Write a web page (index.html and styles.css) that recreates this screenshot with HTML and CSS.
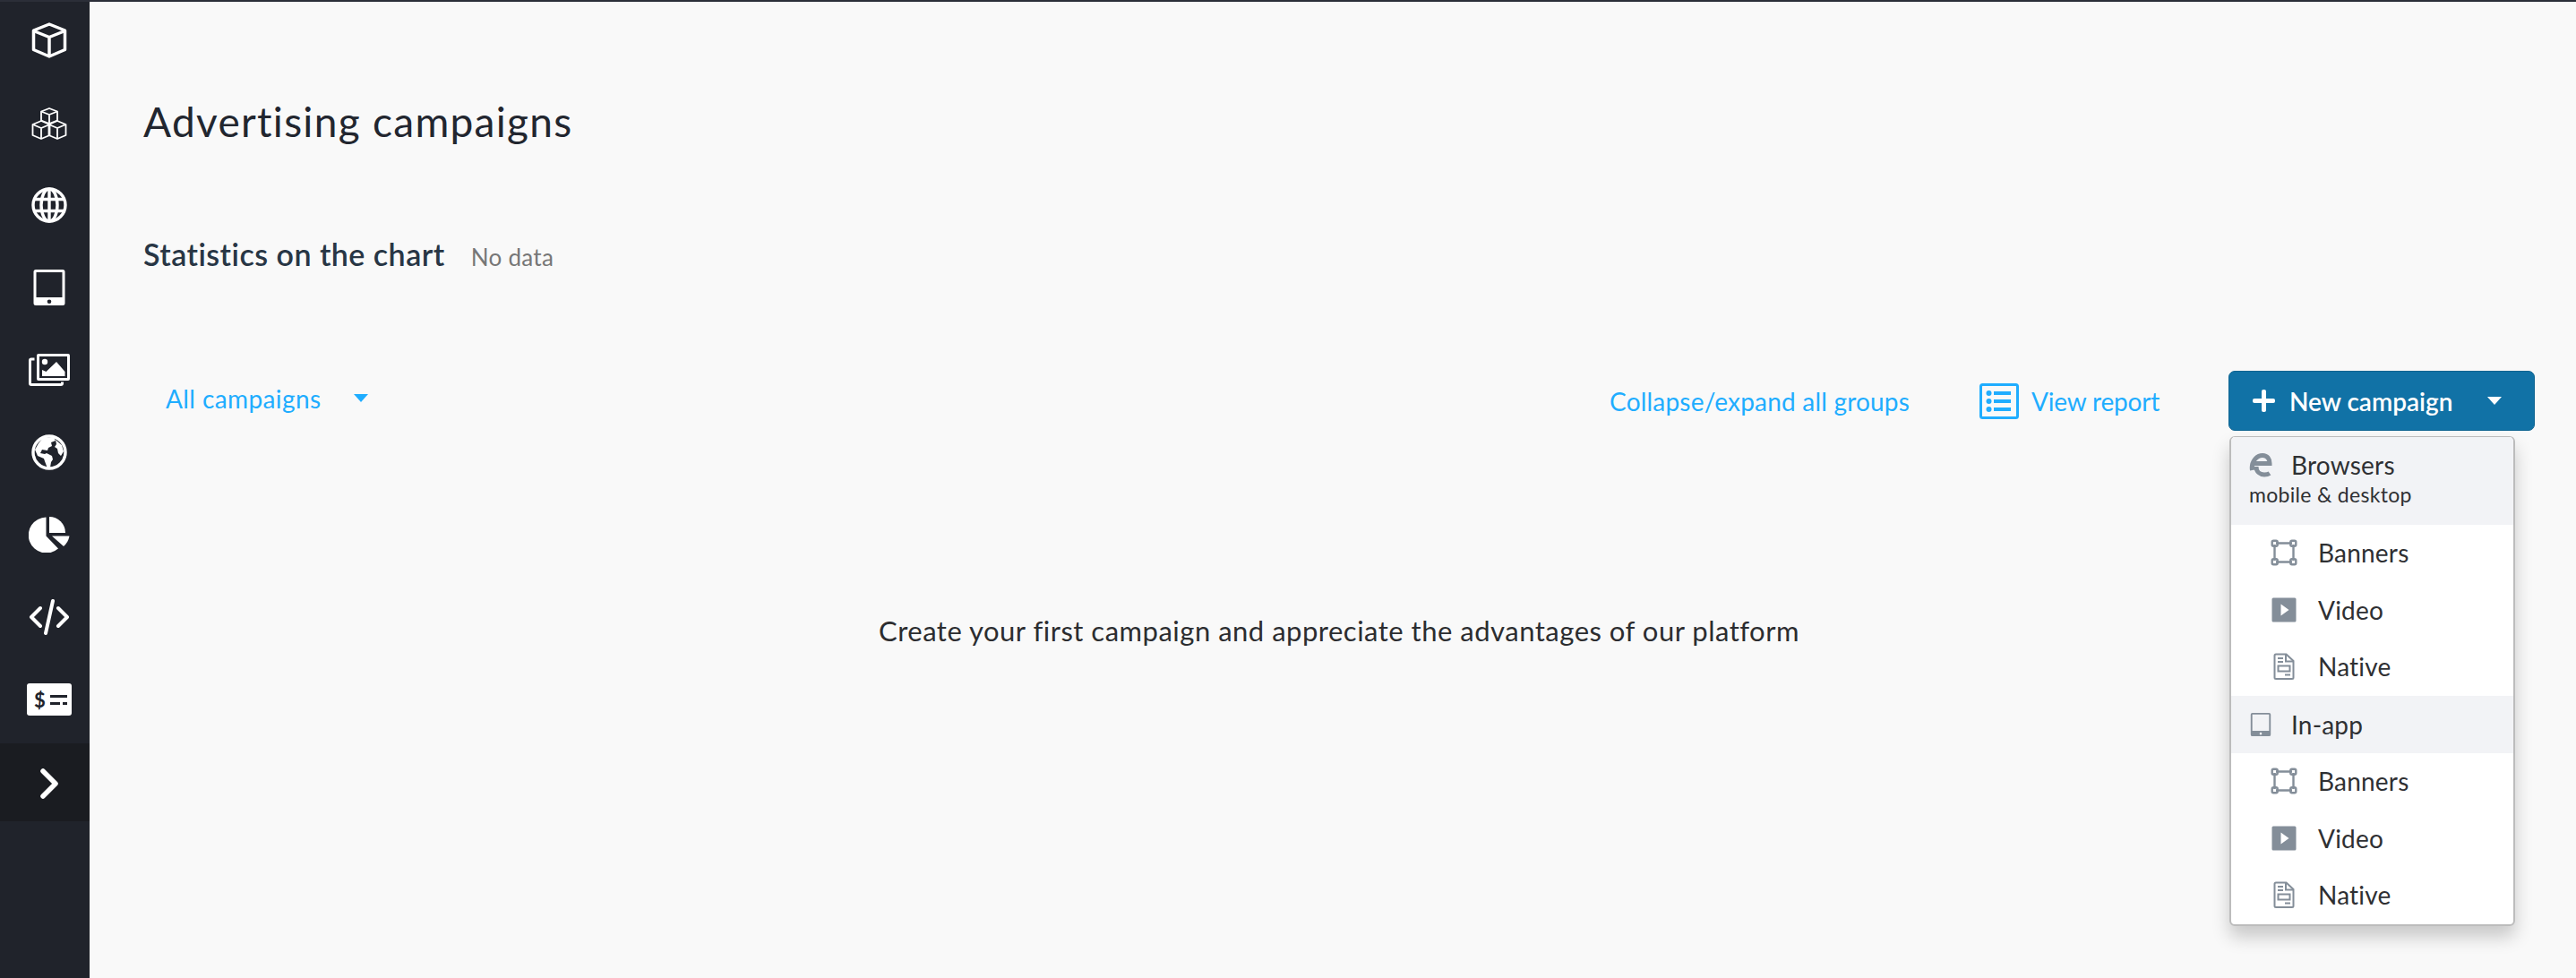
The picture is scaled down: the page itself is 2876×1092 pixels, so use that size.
FILE: index.html
```html
<!DOCTYPE html>
<html lang="en">
<head>
  <meta charset="UTF-8">
  <title>Advertising campaigns</title>
  <link rel="stylesheet" href="styles.css">
</head>
<body>
  <svg class="defs" width="0" height="0" aria-hidden="true">
    <symbol id="i-banners" viewBox="0 0 30 30">
      <g fill="none" stroke="#848e99" stroke-width="2.400">
        <path d="M6 4.500h18M6 25.500h18M4.500 6v18M25.500 6v18"/>
        <rect x="1.700" y="1.700" width="6" height="6" rx="1.500"/>
        <rect x="22.300" y="1.700" width="6" height="6" rx="1.500"/>
        <rect x="1.700" y="22.300" width="6" height="6" rx="1.500"/>
        <rect x="22.300" y="22.300" width="6" height="6" rx="1.500"/>
      </g>
    </symbol>
    <symbol id="i-video" viewBox="0 0 30 30">
      <path fill="#848e99" fill-rule="evenodd" d="M3 1.500h24a1.500 1.500 0 0 1 1.500 1.500v24a1.500 1.500 0 0 1-1.500 1.500H3A1.500 1.500 0 0 1 1.500 27V3A1.500 1.500 0 0 1 3 1.500zm8.500 7v13l9-6.500z"/>
    </symbol>
    <symbol id="i-native" viewBox="0 0 30 30">
      <g fill="none" stroke="#848e99" stroke-width="2">
        <path d="M6 1.500h11.500l8 7.500v18.500a1.500 1.500 0 0 1-1.500 1.500H6a1.500 1.500 0 0 1-1.500-1.500V3A1.500 1.500 0 0 1 6 1.500z"/>
        <path d="M17 1.500v8h8.500M8 6h6M8 10h6M16 24.500h6"/>
        <rect x="8.500" y="14.500" width="13" height="6"/>
      </g>
    </symbol>
    <symbol id="i-tablet" viewBox="0 0 26 30">
      <path fill-rule="evenodd" d="M3 1h20a2 2 0 0 1 2 2v24a2 2 0 0 1-2 2H3a2 2 0 0 1-2-2V3a2 2 0 0 1 2-2zm0 2v19.500h20V3zm10 21.500a1.400 1.400 0 1 0 0 2.800 1.400 1.400 0 0 0 0-2.800z"/>
    </symbol>
  </svg>

  <div class="app">
    <nav class="sidebar">
      <a class="nav-item"><svg class="nav-icon" viewBox="0 0 40 40" fill="none" stroke="#fff" stroke-width="3.500" stroke-linejoin="round"><path d="M20 2l17.500 7v21.500L20 38 2.500 30.500V9z"/><path d="M2.500 9.500L20 16.500l17.500-7M20 16.500V38"/></svg></a>
      <a class="nav-item"><svg class="nav-icon" viewBox="0 -3 40 40" fill="none" stroke="#fff" stroke-width="1.800" stroke-linejoin="round"><path d="M20 1l9 3.500v10L20 18l-9-3.500v-10z"/><path d="M11 4.500l9 3.500 9-3.500M20 8v10"/><path d="M11 15l9.500 4v12L11 35l-9.500-4V19z"/><path d="M1.500 19l9.500 4 9.500-4M11 23v12"/><path d="M29 15l9.500 4v12L29 35l-9.500-4V19z"/><path d="M19.500 19l9.500 4 9.500-4M29 23v12"/></svg></a>
      <a class="nav-item"><svg class="nav-icon" viewBox="0 0 40 40" fill="none" stroke="#fff" stroke-width="3.400"><circle cx="20" cy="20" r="18"/><ellipse cx="20" cy="20" rx="9" ry="18"/><path d="M3 13.500h34M3 26.500h34M20 2v36"/></svg></a>
      <a class="nav-item"><svg class="nav-icon" viewBox="0 0 40 40"><path fill="#fff" fill-rule="evenodd" d="M5 0h30a2.500 2.500 0 0 1 2.500 2.500v35A2.500 2.500 0 0 1 35 40H5a2.500 2.500 0 0 1-2.500-2.500v-35A2.500 2.500 0 0 1 5 0zm.5 3v28h29V3zM20 33.500a2.300 2.300 0 1 0 0 4.600 2.300 2.300 0 0 0 0-4.600z"/></svg></a>
      <a class="nav-item"><svg class="nav-icon nav-icon-wide" viewBox="0 -2 46 40"><path fill="none" stroke="#fff" stroke-width="3" stroke-linejoin="round" d="M6.500 6H3a1.500 1.500 0 0 0-1.500 1.500V33A1.500 1.500 0 0 0 3 34.500h33a1.500 1.500 0 0 0 1.500-1.500v-1.500"/><path fill="#fff" fill-rule="evenodd" d="M11 0h33a2 2 0 0 1 2 2v26a2 2 0 0 1-2 2H11a2 2 0 0 1-2-2V2a2 2 0 0 1 2-2zm1 3v24h31V3z"/><circle cx="18" cy="9" r="3.200" fill="#fff"/><path fill="#fff" d="M15 25v-7l4.500 2L31 9l9.500 11v5z"/></svg></a>
      <a class="nav-item"><svg class="nav-icon" viewBox="0 0 40 40"><circle cx="20" cy="20" r="18" fill="none" stroke="#fff" stroke-width="3.400"/><path fill="#fff" d="M13 4l12-1 2 4-5 2 1 4-4 2-1 3-6-1-2 4 5 1 2-1 6 3 1 4-2 3-1 6-3 1-3-8-1-3-7-3-3-7 4-7zM27 6l7 6 2 7-3 5-3-3-1-5-3-2 2-3z"/></svg></a>
      <a class="nav-item"><svg class="nav-icon nav-icon-wide" viewBox="0 0 46 40"><path fill="#fff" d="M19.500 0.500A20 20 0 1 0 33 35.500L19.500 21.500z"/><path fill="#fff" d="M23 0a18 18 0 0 1 18 18H23z"/><path fill="#fff" d="M26 21.500h19.500A20 20 0 0 1 39 33z"/></svg></a>
      <a class="nav-item"><svg class="nav-icon nav-icon-wide" viewBox="0 0 46 40" fill="none" stroke="#fff" stroke-width="4" stroke-linecap="round" stroke-linejoin="round"><path d="M13 10L3 20l10 10M33 10l10 10-10 10M27 2l-8 36"/></svg></a>
      <a class="nav-item"><span class="bill"><span class="bill-sign">$</span><span class="bill-lines"><i class="solid"></i><i class="dashed"></i></span></span></a>
      <a class="nav-item nav-item-active"><svg class="nav-chevron" viewBox="0 0 20 34" fill="none" stroke="#fff" stroke-width="5.500" stroke-linecap="round" stroke-linejoin="round"><path d="M3 3l14 14L3 31"/></svg></a>
    </nav>

    <main class="content">
      <h1 class="page-title">Advertising campaigns</h1>
      <div class="stats">
        <h2 class="stats-title">Statistics on the chart</h2>
        <span class="stats-note">No data</span>
      </div>
      <div class="toolbar">
        <a class="filter">All campaigns<span class="caret"></span></a>
        <div class="actions">
          <a class="link">Collapse/expand all groups</a>
          <a class="link report">
            <svg class="report-icon" viewBox="0 0 44 40"><rect x="1.500" y="1.500" width="41" height="37" rx="2" fill="none" stroke="#1fadff" stroke-width="3"/><circle cx="10.500" cy="11" r="3" fill="#1fadff"/><circle cx="10.500" cy="20" r="3" fill="#1fadff"/><circle cx="10.500" cy="29" r="3" fill="#1fadff"/><path fill="#1fadff" d="M16 9h19v4H16zM16 18h19v4H16zM16 27h19v4H16z"/></svg>
            View report
          </a>
          <div class="new-campaign">
            <button class="primary-btn"><span class="plus"></span><span class="btn-label">New campaign</span><span class="caret caret-white"></span></button>
            <div class="menu">
              <div class="menu-group menu-group-tall">
                <div class="menu-group-line">
                  <svg class="group-icon" viewBox="0 0 26 28" fill="none" stroke="#848e99"><path stroke-width="5" d="M3.500 20C2 11 8 3.500 15 3.500c5.500 0 8 4 8 9H4M8 16c0 6 4.500 9 9 9 2.500 0 4.500-.5 6-1.500"/></svg>
                  <span>Browsers</span>
                </div>
                <div class="menu-group-sub">mobile &amp; desktop</div>
              </div>
              <a class="menu-item"><svg class="item-icon"><use href="#i-banners"/></svg>Banners</a>
              <a class="menu-item"><svg class="item-icon"><use href="#i-video"/></svg>Video</a>
              <a class="menu-item"><svg class="item-icon"><use href="#i-native"/></svg>Native</a>
              <div class="menu-group">
                <div class="menu-group-line">
                  <svg class="group-icon tablet"><use href="#i-tablet"/></svg>
                  <span>In-app</span>
                </div>
              </div>
              <a class="menu-item"><svg class="item-icon"><use href="#i-banners"/></svg>Banners</a>
              <a class="menu-item"><svg class="item-icon"><use href="#i-video"/></svg>Video</a>
              <a class="menu-item"><svg class="item-icon"><use href="#i-native"/></svg>Native</a>
            </div>
          </div>
        </div>
      </div>
      <p class="empty">Create your first campaign and appreciate the advantages of our platform</p>
    </main>
  </div>
</body>
</html>
```

FILE: styles.css
```css
:root {
  --sidebar-bg: #20232b;
  --sidebar-active: #1a1c21;
  --page-bg: #f9f9f9;
  --link-color: #1fadff;
  --text-color: #2f3033;
  --icon-gray: #848e99;
  --group-bg: #f2f3f6;
  --font-family: Lato, 'Open Sans', sans-serif;
}

* { box-sizing: border-box; }

html, body { height: 100%; }

body {
  margin: 0;
  overflow: hidden;
  font-family: var(--font-family);
  color: var(--text-color);
  background-color: var(--page-bg);
}

a { text-decoration: none; }

.defs { display: block; height: 0; }

.app { display: flex; height: 100%; border-top: 2px solid #2b2e38; }

/* sidebar */
.sidebar {
  display: flex;
  flex-direction: column;
  gap: 52px;
  width: 100px;
  flex-shrink: 0;
  padding: 23px 0 0 10px;
  background-color: var(--sidebar-bg);
}

.nav-item {
  display: flex;
  align-items: center;
  justify-content: center;
  height: 40px;
}

.nav-icon { width: 40px; height: 40px; }
.nav-icon-wide { width: 46px; height: 40px; }
.nav-chevron { width: 20px; height: 34px; }

.nav-item-active {
  height: 87px;
  margin: -23px 0 0 -10px;
  padding: 3px 0 0 10px;
  background-color: var(--sidebar-active);
}

.bill {
  display: flex;
  align-items: center;
  gap: 5px;
  width: 50px;
  height: 36px;
  padding: 0 5px 0 8px;
  background-color: #fff;
  border-radius: 3px;
}

.bill-sign { font-size: 22px; font-weight: 700; color: var(--sidebar-bg); }
.bill-lines { flex: 1; display: flex; flex-direction: column; gap: 5px; }
.bill-lines i { display: block; height: 3px; }
.bill-lines .solid { background-color: var(--sidebar-bg); }
.bill-lines .dashed {
  background: repeating-linear-gradient(90deg, var(--sidebar-bg) 0 11px, transparent 11px 14px);
}

/* main column */
.content {
  flex: 1;
  padding: 0 46px 0 60px;
}

.page-title {
  margin: 108px 0 0;
  font-size: 46px;
  line-height: 52px;
  font-weight: 400;
  letter-spacing: 1.300px;
  color: #22262f;
}

.stats {
  display: flex;
  align-items: baseline;
  gap: 29px;
  margin-top: 102px;
}

.stats-title {
  margin: 0;
  font-size: 34px;
  line-height: 40px;
  font-weight: 600;
  letter-spacing: 0.480px;
  color: #283645;
}

.stats-note { font-size: 26px; letter-spacing: 0.300px; color: #777; }

.toolbar {
  display: flex;
  justify-content: space-between;
  align-items: center;
  margin-top: 110px;
}

.filter {
  display: flex;
  align-items: center;
  margin-left: 25px;
  margin-top: -6px;
  font-size: 28px;
  letter-spacing: 0.400px;
  color: var(--link-color);
}

.caret {
  display: inline-block;
  width: 0;
  height: 0;
  margin-left: 37px;
  border-left: 8.500px solid transparent;
  border-right: 8.500px solid transparent;
  border-top: 9px solid var(--link-color);
}

.caret-white { margin-left: 0; border-top-color: #fff; }

.actions { display: flex; align-items: center; }

.link {
  display: flex;
  align-items: center;
  font-size: 28px;
  letter-spacing: 0.200px;
  color: var(--link-color);
}

.report { margin-left: 78px; gap: 14px; letter-spacing: -0.200px; }
.report-icon { width: 44px; height: 40px; }

.new-campaign { position: relative; margin-left: 77px; }

.primary-btn {
  display: flex;
  align-items: center;
  width: 342px;
  height: 67px;
  padding: 0 36px 0 26px;
  font-family: inherit;
  font-size: 28px;
  font-weight: 600;
  color: #fff;
  background-color: #1172a6;
  border: 1px solid #0e6491;
  border-radius: 7px;
}

.plus {
  position: relative;
  width: 25px;
  height: 25px;
  flex-shrink: 0;
}

.plus::before, .plus::after {
  content: "";
  position: absolute;
  background-color: #fff;
  border-radius: 2px;
}

.plus::before { left: 0; right: 0; top: 10px; height: 5px; }
.plus::after { top: 0; bottom: 0; left: 10px; width: 5px; }

.btn-label { flex: 1; margin-left: 16px; text-align: left; }

/* dropdown */
.menu {
  position: absolute;
  top: 73px;
  left: 1px;
  width: 319px;
  background-color: #fff;
  border: 1px solid #bcbcbc;
  border-width: 1px 2px 2px;
  border-radius: 6px;
  overflow: hidden;
  box-shadow: 0 12px 20px rgba(0, 0, 0, 0.2);
  font-size: 28px;
  letter-spacing: 0.200px;
}

.menu-group {
  display: flex;
  flex-direction: column;
  justify-content: center;
  height: 64px;
  padding-left: 20px;
  background-color: var(--group-bg);
}

.menu-group-tall { height: 98px; padding-bottom: 6px; }

.menu-group-line { display: flex; align-items: center; }
.menu-group-line span { margin-left: 21px; }

.group-icon { width: 26px; height: 28px; flex-shrink: 0; }
.tablet { fill: var(--icon-gray); }

.menu-group-sub { margin-top: 2px; font-size: 23px; letter-spacing: 0.300px; }

.menu-item {
  display: flex;
  align-items: center;
  height: 63.700px;
  padding: 0 0 2px 44px;
  color: var(--text-color);
}

.item-icon { width: 30px; height: 30px; margin-right: 23px; }

.empty {
  margin: 0;
  margin-top: 204px;
  text-align: center;
  font-size: 31px;
  letter-spacing: 0.500px;
  color: #2c2d30;
}
```
